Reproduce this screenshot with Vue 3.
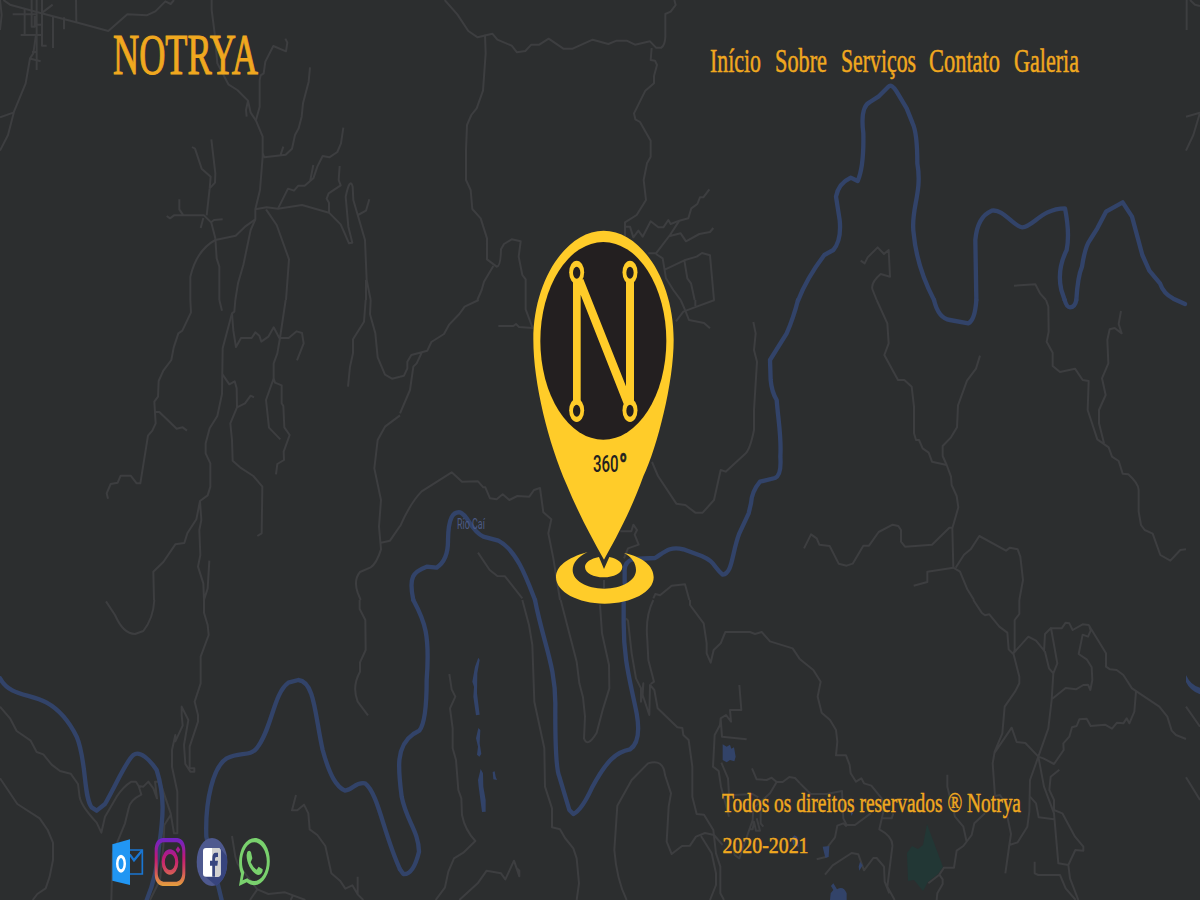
<script setup>
const tiles = [
  {
    x: 0, y: 0,
    roads: [
      'M10 0L30 14L110 36L228 67L325 93L382 43L440 46L466 34L496 4L512 12L522 0',
      'M0 0L5 45L0 90', 'M38 43H108M74 25V104M62 105H124M95 0V80H104V48M110 0V210M126 0V137H140M159 50V144M192 52V88M228 0L229 66M124 40L158 14M108 74H124',
      'M108 104L100 160L90 175L77 250L42 335L24 405L0 452M0 352L42 337M92 176L122 184M96 156H108',
      'M635 0V30L644 100L652 190L685 253L712 270L744 302L752 338L768 362L788 410V470L780 570L766 628V658L752 690L730 795L714 850L706 900M744 302L738 330L740 350',
      'M768 360L779 320V240L782 226L791 220L796 185L820 138L858 154L862 128L856 116',
      'M930 202L926 245L909 310L905 350L896 385L885 405L876 446L857 464L793 472L788 460M850 440L842 464',
      'M1030 383L1023 430L1012 456L988 472L968 468L952 500L940 535L914 557H895L882 572L864 566L834 626M940 495L930 545',
      'M766 628L800 622L834 626L906 615L987 638L1022 673L1034 700L1047 730L1057 728L1045 680L1037 590Q1050 530 1058 560L1060 600L1095 720L1100 840L1112 900M1098 840V900M1074 645L1098 632L1108 598M987 638V608L980 596L986 580L1022 556L1016 540L1019 498',
      'M500 648L510 655L522 646H612L634 668L646 715L650 775L658 800V900M538 598V628L550 646M634 666L642 660L668 658M602 684L610 654M620 646L629 565L645 548L646 520L634 418M629 565L632 530L605 506L585 446L576 441',
      'M766 658L735 680L707 707L646 720Q590 750 571 830V900M798 628L830 675L867 778L858 900',
    ],
    rivers: [],
  },
  {
    x: 400, y: 0,
    roads: [
      'M134 0L172 43L205 93L233 112L277 101L292 119L335 137L351 157L376 153L394 134H418L446 116L490 146H518L578 119L625 132L650 122H680L705 134L750 124L768 143H784Q795 135 796 110V42L812 35L827 15L823 0',
      'M255 104L257 160L249 272L230 325L214 345L201 375L198 450V540L212 570L217 627L242 655L261 715V778L290 800Q302 800 303 748L312 732L335 718L362 724L356 770L367 825L377 838V900M280 798L252 845L245 870L232 900',
      'M755 144L752 180L765 182L771 195L762 228V250L736 272L702 340L706 358L720 366L752 422V470L741 490L731 540L738 600L710 645L675 667V710M675 680L690 680L700 712L715 692L728 710L752 664L775 682H790L805 660L812 672L838 662L865 655L874 625L892 612L900 592H910L928 568',
      'M838 662L810 705L768 760H745M810 708L842 700L858 724L898 702L930 696L940 684M768 762L788 775L798 835L820 870L842 900M796 808L853 781L890 770L906 759L930 766L942 900M853 781L862 835L873 850L884 900',
    ],
    rivers: [],
  },
  {
    x: 800, y: 0,
    roads: ['M182 782L194 790L203 772L233 742L252 762L266 750L270 830L242 822Q210 850 218 870L230 900', 'M642 857L706 853L720 880L738 900', 'M1160 0V90M1170 0L1185 14L1200 18M1158 350L1200 338L1180 405L1158 452'],
    rivers: ['M-6 902Q20 835 73 765L100 750Q125 720 119 660L108 590Q115 550 152 533L173 543Q192 500 190 400Q180 320 210 306L235 290L265 260Q275 250 290 275L320 325L338 370Q352 400 352 490C368 580 330 630 341 700Q350 800 402 900', 'M529 900L526 720Q532 650 575 632C610 625 640 680 667 682C700 680 725 625 795 625Q810 700 800 750Q770 810 784 870L794 900', 'M829 900Q833 830 846 800Q855 740 870 720L892 685L918 635L968 607L996 650L1027 765L1048 812L1080 850Q1090 880 1120 896L1155 912'],
  },
  {
    x: 0, y: 300,
    roads: [
      'M571 0L573 37L547 92L535 100L521 143L514 180L490 212L476 243L474 290L463 305L467 370L457 392L444 407L421 550H410L392 527H362L353 548L332 552L320 580L324 596M464 335L478 336L530 386L548 382L561 392',
      'M658 0L666 32M706 0L703 35L696 40L668 145L666 282L652 348L629 385L617 430V460L631 490V560L623 586L600 603L589 658L562 700L553 729L526 733L490 786L460 815L462 900M600 603L604 660L598 690L601 765L594 800L610 850L612 900L623 865L628 782',
      'M696 40L700 92L708 141L723 114H755L766 97L778 107L784 125L805 110L821 82L838 114H866L890 94L906 99L911 130L891 181M857 0L840 114L832 160L821 190V235L798 300L807 383L841 418M821 235L825 248L845 256V310L850 318L853 382L869 405L851 455L852 480L832 492L828 523',
      'M668 224L688 253L704 244L710 265L711 322L735 310L752 287L762 292M711 322L691 370L696 420L698 482L720 502L760 528L787 560L785 700L772 708',
      'M1097 0L1092 65L1059 118V160L1050 200L1044 260M1112 0L1110 43L1126 100L1133 172L1155 224L1176 236L1200 230M1200 346L1155 380L1133 420L1123 505L1143 600L1137 680L1143 748Q1130 790 1112 802L1080 816Q1060 840 1073 878L1082 900M1143 728L1170 722L1200 678',
    ],
    rivers: [],
  },
  {
    x: 400, y: 300,
    roads: [
      'M236 0L194 20L178 42L148 73L132 102L94 126L82 152L34 165L22 185V205L12 227L0 230M66 156L50 190L40 200L30 270L0 340',
      'M0 680Q30 610 65 574L155 517L186 545L234 544L250 562H256L270 595L290 598L308 583L328 600L352 588L388 590L402 570L420 564L430 637L454 658L445 700L460 775L480 900',
      'M377 0V28L398 84L357 81L348 72L340 78H295M842 0L856 32L867 60L912 69L930 85M944 0L890 20L850 35L828 64M886 0V18M1060 66L1067 100L1062 150L1071 185L1062 330L1062 390Q1050 450 1035 462L977 515L962 510L942 600L908 638H886L856 615L829 611L774 528L756 486',
      'M234 758L269 810L292 828L315 829L367 895M661 694H694L700 674L711 690L704 704L716 734L684 745L672 775M612 840V866M760 895L766 882L780 886L815 857L855 853L868 900',
    ],
    rivers: ['M40 900C25 830 40 815 80 800L110 803Q145 780 144 720C145 650 160 635 180 637C205 645 210 690 250 710L295 722C350 750 380 835 405 900', 'M1194 0Q1180 55 1160 100L1110 180L1112 240Q1115 275 1130 300C1135 365 1145 410 1141 470Q1145 525 1125 534L1080 545Q1055 575 1053 610L1046 640L1018 700C995 760 998 820 968 824C940 800 945 785 905 768L850 748C810 738 795 755 765 774L700 777Q672 785 674 815V850'],
  },
  {
    x: 800, y: 300,
    roads: [
      'M230 0L262 70L266 130L253 165L294 240H313L335 260L342 320V400L348 420H357L368 445L386 458L396 485L440 495',
      'M540 167L528 206L501 242L474 316L471 382L453 412L428 438V468L440 495L453 530L455 555L470 588L475 622L457 685L460 803L480 815L502 868L522 900M457 683H448L396 734L315 740L303 725V690L295 678L278 674L236 696L207 737H190L158 791L140 797L116 791L89 738L58 734L50 715L33 703L12 745',
      'M460 803L382 815V846L341 857M467 803L492 764L512 748L538 708L618 752L630 743L653 748L661 770L669 840L658 900',
      'M738 0L745 20L746 95L740 125L758 158V198L780 216L825 206L848 240L866 243L863 330L892 418L926 442L936 470L956 483L968 521L985 523Q1015 550 1016 570V635L1023 675L1034 690L1058 701L1081 765L1111 782L1141 750L1158 748M963 33L956 72L965 100L944 84L929 88L922 120L925 190L906 235L917 285L897 330V370L912 430',
    ],
    rivers: ['M402 0Q415 55 450 60L505 70Q525 60 529 0', 'M794 0Q800 22 810 22Q825 22 829 0'],
  },
  {
    x: 0, y: 600,
    roads: [
      'M318 4L345 45Q370 102 405 102L430 93Q460 55 463 0M612 0V38L623 75L626 105L602 170V250L584 305L594 345V365L569 440V505H583V515H571L556 492L552 435L565 360L545 320V345L548 377L526 424V405L516 450V500L532 575V700H522L512 640L480 545L465 545L471 595L460 565L445 545L430 560L416 558L424 584Q390 600 386 625L375 670L338 760L334 900M512 645L493 675L490 740L480 840L450 900M420 565L408 545H394Q370 560 350 590L315 650L304 698L290 668Q245 620 239 592L234 552L212 521L180 513L155 494L130 463L110 456L92 422L50 393L30 355L0 320',
      'M0 535L52 612L119 655L143 690L159 728V780L149 830L137 865L112 882L98 900M1079 0V27L1096 60L1097 150L1080 187V215Q1055 260 1073 305L1104 346M888 585L876 631H892L912 614L925 640L929 688L952 705L976 738L994 820L1020 842L1036 866L1057 856L1073 883L1090 900M1073 830V885M696 708L706 770L713 792L772 868L805 882L855 877L916 900M772 868L750 900M880 884L872 900',
    ],
    rivers: ['M0 235C30 290 90 280 140 308C180 330 210 370 230 410C260 480 250 590 275 622L290 632L315 612C345 560 380 480 400 465C420 450 450 480 470 510C495 590 490 650 477 740Q470 830 440 900', 'M665 900L619 710C615 600 640 500 680 475C720 455 750 470 770 445C815 390 820 280 865 248L895 240C945 245 945 350 968 450C990 530 1010 560 1035 572C1060 570 1065 545 1095 550C1135 580 1150 700 1200 808'],
  },
  {
    x: 400, y: 600,
    roads: [
      'M148 222L155 268L166 290L150 325L158 385V445L168 480L175 570L184 595L186 645Q195 690 226 723L190 758L162 775L145 815L135 862L107 900M178 900L233 850L260 812L303 820L316 838L342 782L358 829V812L348 802',
      'M367 0L387 75L397 135L403 305L433 445L435 560L456 625V682L480 688L495 714L520 745L530 775L537 850L530 900M482 0L530 185L538 250L549 292L555 350L552 415Q562 445 590 398L608 330L628 265L627 195L606 100L600 14',
      'M678 55L684 62L695 160L708 235L723 265V305L730 250L728 285L748 345L750 255L763 270L773 325L832 382L847 384L850 405L866 420L877 500V590L890 642L912 644L940 690L948 760L961 800V880L972 900',
      'M760 0Q735 50 742 120L745 180L762 245L752 252M870 0V15L911 70L920 130V160L932 188L941 150L962 130L976 96H1050L1065 102L1085 96L1110 124L1178 145L1200 178',
      'M680 900Q650 840 643 750L652 617L695 540L744 490Q790 475 795 525L813 580L806 620L800 725L815 762L846 738L870 737L888 710L915 699L942 705L968 735M903 708L935 760L948 820V855L930 900',
      'M1018 255L1024 330H990L993 365L978 345L962 355L960 375L944 405L939 500L956 513L963 560L987 650M962 355L966 410L1040 418M964 488L984 535L988 600M1056 505L1070 538L1100 540L1115 533L1130 546L1110 580L1060 625L1058 660L1018 775L1004 765L1000 745M1130 546H1148L1168 531L1185 534L1200 550M1000 585L1058 582L1075 592M1082 625V670L1090 680M1048 688H1058L1062 665L1068 692H1080L1070 655',
    ],
    rivers: ['M40 0C75 65 90 105 80 240Q80 365 58 392L40 402C-15 440 -5 510 5 590C20 665 55 690 57 755Q40 825 10 822L0 808', 'M405 0C430 130 468 200 466 320Q465 500 478 530L508 630L520 642Q545 630 575 565C620 480 650 455 690 448Q725 425 710 340C690 240 670 180 671 60V5'],
  },
  {
    x: 800, y: 600,
    roads: [
      'M0 178L40 210L62 245L53 290L65 338L90 360L108 390L112 425L108 466H138L149 495L152 520L168 545L184 535L192 550L214 557L245 595L250 635L238 688Q280 710 277 740L262 860L284 900M243 655H275L280 640M75 824L98 796L155 759L175 763L192 811L220 774H230L252 800L254 845L268 880M0 550L32 582H80L126 573L130 655L140 675H165L212 640M50 778L80 770L85 738L105 712L112 677L130 670L140 680',
      'M520 0L545 38L555 46L568 43L598 80L622 98L626 148L640 162L644 150V60L658 42V0M640 160L658 230V250L645 275L614 320L607 400L584 455L578 490L585 588M640 160L685 110L708 122L735 155L747 205L760 220L772 190L753 84L735 102L732 155M753 84L785 85L797 68L808 70L818 90L848 73L866 75L918 160V200L930 208L950 210L970 225L996 265L1078 320L1102 350L1115 392L1128 405L1158 417M868 78L872 92L864 110L848 104L836 162L860 178L875 202L877 240L871 270L864 254L850 255L828 268L797 264L755 298M760 220L755 300L745 385L715 470L690 540L688 635L682 680L653 727L628 735L633 702L622 650M1008 275L1003 335L988 370L980 355L970 370L951 368L936 386L915 374L872 378L860 356L838 358L830 378L816 382L808 410L790 430L791 450L762 492L730 475L715 470L676 429L650 426L635 383L584 458',
      'M715 470L732 560L762 640L775 790L805 795L826 750L850 752V740L825 710L787 640L762 630V600L748 570L752 530L778 509M690 590L708 610L716 652L762 658M628 735L616 820M704 785V820L715 825H780L797 865L827 900M805 795L810 835L835 900M585 588L600 585L610 600M555 640L523 670L515 705L490 738L470 752L462 803L432 803L418 824L385 850M418 824L428 838V852L412 880L410 900M500 725L490 680L465 650L442 560V524M1158 320L1200 380M1158 532L1200 600',
    ],
    rivers: [],
  },
]

const ponds = [
  'M235 173L239 180L232 220L231 280L239 344L228 346L220 290L222 260L217 245L225 200Z',
  'M235 384L241 390L239 430L244 462L238 470L231 464L234 440L228 415Z',
  'M242 507L249 520L250 560L257 600L257 635L246 636L236 560L234 540Z',
  'M278 516L284 514L287 530L291 540L280 538Z',
  'M968 433L980 440L990 434L994 446L1002 442L1007 470L1003 484L990 480L980 487L968 480Z',
  'M1268 740L1288 738L1286 771L1276 773ZM1184 706L1192 712L1196 740L1180 735L1175 715ZM1380 785L1388 796L1378 812L1376 800Z',
  'M1290 900L1292 880L1300 870L1293 858L1300 850L1311 868Q1330 856 1340 880V900ZM1352 635L1360 638L1354 648Z',
  'M2358 225Q2372 256 2400 263V283Q2370 272 2358 246Z',
]

const links = [
  { label: 'Início', width: 51 },
  { label: 'Sobre', width: 52 },
  { label: 'Serviços', width: 75 },
  { label: 'Contato', width: 71 },
  { label: 'Galeria', width: 65 },
]
</script>

<template>
  <div class="page">
    <svg class="map" width="1200" height="900" viewBox="0 0 1200 900" aria-hidden="true">
      <path class="park" d="M927 824L943 867L938 874L928 882L923 891L914 880L908 881L907 853L912 846L918 849L923 845Z" />
      <g v-for="(t, i) in tiles" :key="i" :transform="`translate(${t.x} ${t.y}) scale(.333333)`">
        <path v-for="(d, j) in t.roads" :key="'r' + j" class="road" :d="d" />
        <path v-for="(d, j) in t.rivers" :key="'w' + j" class="river" :d="d" />
      </g>
      <g transform="translate(400 600) scale(.333333)">
        <path v-for="(d, i) in ponds" :key="i" class="pond" :d="d" />
      </g>
      <text class="river-name" transform="translate(457 529) scale(.65 1)" textLength="43" lengthAdjust="spacingAndGlyphs">Rio Caí</text>
    </svg>

    <header class="top">
      <h1 class="brand">
        <svg width="146" height="56"><text transform="translate(0 47) scale(.6 1)" :textLength="145 / 0.6" lengthAdjust="spacingAndGlyphs">NOTRYA</text></svg>
      </h1>
      <nav class="nav">
        <a v-for="l in links" :key="l.label">
          <svg :width="l.width" height="36"><text transform="translate(0 26) scale(.66 1)" :textLength="l.width / 0.66" lengthAdjust="spacingAndGlyphs">{{ l.label }}</text></svg>
        </a>
      </nav>
    </header>

    <main class="hero">
      <svg width="142" height="376" viewBox="399 -209 426 1128">
        <path fill="#ffcc29" d="M400 120C400 -60 500 -207 611 -207C722 -207 821 -60 821 120C821 250 772 440 730 530C695 630 640 730 612 780C575 715 535 640 500 555C445 430 400 250 400 120Z" />
        <ellipse cx="610" cy="123.500" rx="189" ry="296.500" fill="#231f20" />
        <path fill="#ffcc29" d="M519 -55H542V305H519ZM678 -55H702V305H678ZM542 -15L530 -55L550 -62L680 265L695 310L672 315Z" />
        <g v-for="y in [-82, 332]" :key="y">
          <g v-for="x in [530, 690]" :key="x">
            <ellipse :cx="x" :cy="y" rx="22.500" ry="35" fill="#ffcc29" />
            <ellipse :cx="x" :cy="y + 1" rx="11" ry="18" fill="#231f20" />
          </g>
        </g>
        <text class="degrees" transform="translate(579 516) scale(.63 1)" textLength="122" lengthAdjust="spacingAndGlyphs">360</text>
        <text class="ring" transform="translate(657 533) scale(.63 1)" textLength="40" lengthAdjust="spacingAndGlyphs">°</text>
        <path fill="#ffcc29" d="M563 757C500 775 468 800 468 833C468 877 534 912 614 912C695 912 761 877 761 833C761 800 730 772 672 760C695 772 708 790 708 811C708 843 665 867 613 867C560 867 518 843 518 811C518 790 535 770 563 757Z" />
        <path fill="#ffcc29" d="M597 772L612 808L628 772C655 778 667 790 667 802C667 820 641 833 611 833C581 833 555 820 555 802C555 788 572 777 597 772Z" />
      </svg>
    </main>

    <footer class="bottom">
      <div class="social">
        <svg width="32" height="48" viewBox="36 54 96 144">
          <path fill="none" stroke="#1976d2" stroke-width="5" d="M88 90H127V162H88" />
          <path fill="none" stroke="#1976d2" stroke-width="7" d="M89 103L102 121L127 91" />
          <path fill="#2196f3" d="M37 73L90 58V195L37 182Z" />
          <path fill="#fff" fill-rule="evenodd" d="M48 131A15 27 0 1 0 78 131A15 27 0 1 0 48 131ZM55.500 131A7.500 17 0 1 1 70.500 131A7.500 17 0 1 1 55.500 131Z" />
        </svg>
        <svg width="32" height="48" viewBox="162 54 96 144">
          <defs><linearGradient id="insta" gradientUnits="userSpaceOnUse" x1="210" y1="54" x2="210" y2="198"><stop offset="0" stop-color="#7024c4" /><stop offset=".12" stop-color="#7f22b5" /><stop offset=".42" stop-color="#c21975" /><stop offset=".62" stop-color="#cd3d62" /><stop offset="1" stop-color="#e5a03d" /></linearGradient></defs>
          <path fill="url(#insta)" fill-rule="evenodd" d="M188 54H232C248 56 256 70 256 92V160C256 182 248 196 232 198H188C172 196 164 182 164 160V92C164 70 172 56 188 54ZM190 67C180 68 173 78 173 95V157C173 174 180 184 190 185H230C240 184 247 174 247 157V95C247 78 240 68 230 67Z" />
          <path fill="url(#insta)" fill-rule="evenodd" d="M185 126A25 38 0 1 0 235 126A25 38 0 1 0 185 126ZM194.500 126A15.500 24 0 1 1 225.500 126A15.500 24 0 1 1 194.500 126Z" />
          <path fill="#a61b94" d="M234 79L241 89L234 99L227 89Z" />
        </svg>
        <svg width="32" height="48" viewBox="288 54 96 144">
          <ellipse cx="336" cy="126" rx="46" ry="72" fill="#4e598f" />
          <path fill="#37447e" d="M361 85L381 110Q386 175 348 197L315 169Z" />
          <rect x="309" y="84" width="53" height="86" rx="9" fill="#fff" />
          <path fill="#d1d1d1" d="M336 84H353Q362 84 362 94V159Q362 170 353 170H336Z" />
          <path fill="#384680" d="M337 170V137H330V122H337V115Q337 98 347 98H354V111H349Q345 111 345 117V122H354L352 137H345V170Z" />
        </svg>
        <svg width="32" height="48" viewBox="414 54 96 144">
          <path fill="#79d16d" fill-rule="evenodd" d="M417 198L423 161C412 136 418 94 431 75C449 48 480 47 497 75C513 100 514 145 497 172C482 198 459 202 440 187ZM428 181L442 175C457 188 477 186 490 165C504 143 504 106 489 84C474 61 450 62 437 84C423 107 423 138 433 157Z" />
          <path fill="#79d16d" d="M442 95Q450 88 453 97L457 115L452 127Q461 145 470 149L476 140L488 148Q489 162 475 165C457 163 438 127 440 104Z" />
        </svg>
      </div>
      <div class="legal">
        <svg width="300" height="36"><text transform="translate(0 28) scale(.66 1)" font-size="28" :textLength="299 / 0.66" lengthAdjust="spacingAndGlyphs">Todos os direitos reservados ® Notrya</text></svg>
        <svg width="300" height="28"><text transform="translate(0.5 21) scale(.86 1)" font-size="22.500" :textLength="86 / 0.86" lengthAdjust="spacingAndGlyphs">2020-2021</text></svg>
      </div>
    </footer>
  </div>
</template>

<style>
body { margin: 0; background: #2c2e2f; }
</style>

<style scoped>
.page { position: relative; width: 1200px; height: 900px; overflow: hidden; background: #2c2e2f; font-family: "Liberation Serif", serif; display: flex; flex-direction: column; }
.page svg { display: block; overflow: visible; }
.map { position: absolute; inset: 0; }
.road { fill: none; stroke: #3d3e40; stroke-width: 6; stroke-linejoin: round; }
.river { fill: none; stroke: #324369; stroke-width: 13; stroke-linejoin: round; stroke-linecap: round; }
.pond { fill: #324369; }
.park { fill: #223735; }
.river-name { font: 14px Roboto, sans-serif; fill: #4b5a85; }
.top { position: relative; display: flex; justify-content: space-between; box-sizing: border-box; height: 110px; padding: 27px 121px 0 113px; }
.brand { margin: 0; font-weight: 400; font-size: 57px; }
.top text, .legal text { fill: #f0a81f; stroke: #f0a81f; stroke-width: .5px; }
.brand text { stroke-width: 1.1px; }
.nav { display: flex; gap: 13.700px; padding-top: 18.500px; font-size: 33px; }
.hero { position: relative; flex: 1; padding: 120px 0 0 532.700px; }
.degrees { font: 500 71px Roboto, sans-serif; fill: #231f20; }
.ring { font: 500 100px Roboto, sans-serif; fill: #231f20; stroke: #231f20; stroke-width: 2; }
.bottom { position: relative; display: flex; justify-content: space-between; height: 116px; padding: 0 178px 0 112px; }
.social { display: flex; gap: 10px; padding-top: 54px; }
.legal { display: flex; flex-direction: column; gap: 12px; }
</style>
